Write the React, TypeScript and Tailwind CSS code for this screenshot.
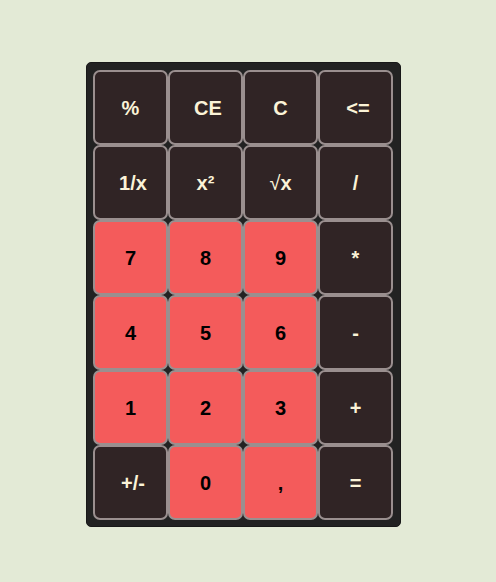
import React from 'react';

type Key = { label: React.ReactNode; tone: 'dark' | 'red'; shift?: boolean };

const keys: Key[] = [
  { label: '%', tone: 'dark' },
  { label: 'CE', tone: 'dark', shift: true },
  { label: 'C', tone: 'dark' },
  { label: '<=', tone: 'dark', shift: true },
  { label: '1/x', tone: 'dark', shift: true },
  { label: 'x²', tone: 'dark' },
  {
    label: (
      <span>
        <span className="font-normal">√</span>x
      </span>
    ),
    tone: 'dark',
  },
  { label: '/', tone: 'dark' },
  { label: '7', tone: 'red' },
  { label: '8', tone: 'red' },
  { label: '9', tone: 'red' },
  { label: '*', tone: 'dark' },
  { label: '4', tone: 'red' },
  { label: '5', tone: 'red' },
  { label: '6', tone: 'red' },
  { label: '-', tone: 'dark' },
  { label: '1', tone: 'red' },
  { label: '2', tone: 'red' },
  { label: '3', tone: 'red' },
  { label: '+', tone: 'dark' },
  { label: '+/-', tone: 'dark', shift: true },
  { label: '0', tone: 'red' },
  { label: ',', tone: 'red' },
  { label: '=', tone: 'dark' },
];

export default function App() {
  return (
    <div className="flex min-h-[582px] w-full bg-[#e3ead6] pl-[86px] pt-[62px] font-['Liberation_Sans',Arial,sans-serif]">
      <div className="h-[465px] w-[315px] rounded-[5px] border border-[#181818] bg-[#222222] pb-[6px] pl-[6px] pr-[7px] pt-[7px]">
        <div className="grid grid-cols-[repeat(4,75px)] grid-rows-[repeat(6,75px)]">
          {keys.map((k, i) => (
            <button
              key={i}
              type="button"
              className={`flex items-center justify-center rounded-[7px] border-2 border-[#9a8f8f] text-[20px] font-bold ${
                k.tone === 'red' ? 'bg-[#f45b5b] text-black' : 'bg-[#302425] text-[#fbf3d8]'
              } ${k.shift ? 'pl-[5px]' : ''}`}
            >
              {k.label}
            </button>
          ))}
        </div>
      </div>
    </div>
  );
}
